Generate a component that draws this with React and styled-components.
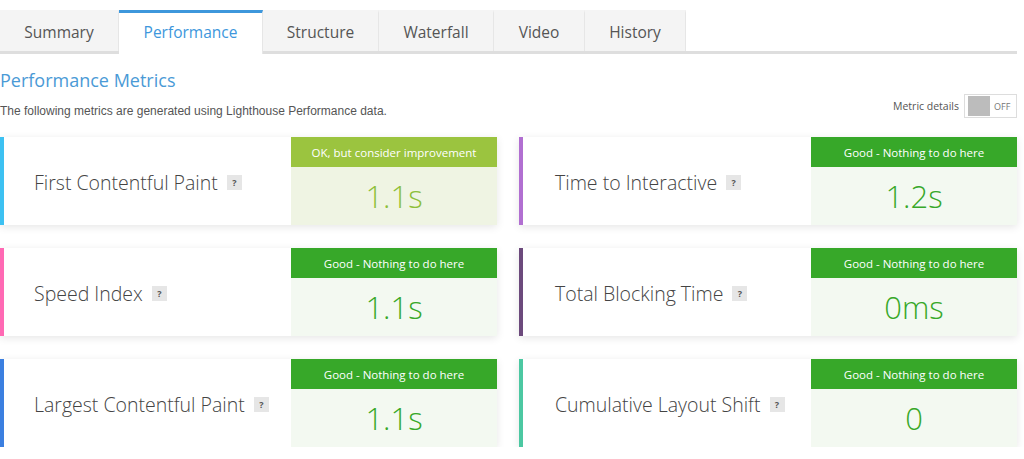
import React from "react";
import styled, { createGlobalStyle } from "styled-components";

const Global = createGlobalStyle`
  body {
    margin: 0;
    background: #fff;
    font-family: "Open Sans", "Liberation Sans", sans-serif;
  }
`;

const Page = styled.div`
  width: 1017px;
  padding-top: 10px;
`;

const Tabs = styled.div`
  display: flex;
  height: 41px;
  border-bottom: 3px solid #dedede;
`;

const Tab = styled.div`
  width: ${(p) => p.w}px;
  flex: none;
  display: flex;
  align-items: center;
  justify-content: center;
  font-size: 15.5px;
  color: ${(p) => (p.active ? "#3d97dc" : "#555")};
  background: ${(p) => (p.active ? "#fff" : "#f4f4f4")};
  border-right: 1px solid #e6e6e6;
  box-sizing: border-box;
  border-top: 3px solid ${(p) => (p.active ? "#3d97dc" : "#f4f4f4")};
  height: ${(p) => (p.active ? "44px" : "41px")};
  padding-bottom: ${(p) => (p.active ? "3px" : "0")};
  position: relative;
  z-index: ${(p) => (p.active ? 1 : 0)};
`;

const Head = styled.div`
  display: flex;
  justify-content: space-between;
  align-items: flex-end;
  margin-top: 14px;
`;

const Title = styled.h2`
  margin: 0;
  font-size: 18px;
  font-weight: 400;
  color: #4a9ad6;
  line-height: 24px;
`;

const Sub = styled.p`
  margin: 12px 0 0;
  font-family: "Liberation Sans", Arial, sans-serif;
  font-size: 12px;
  color: #555;
`;

const Toggle = styled.div`
  display: flex;
  align-items: center;
  gap: 5px;
  font-size: 10.5px;
  color: #555;
  margin-bottom: 0;
`;

const Switch = styled.div`
  width: 53px;
  height: 24px;
  box-sizing: border-box;
  border: 1px solid #ddd;
  display: flex;
  align-items: center;
  padding-left: 3px;
  gap: 4px;
  font-size: 9px;
  color: #777;
  &::before {
    content: "";
    width: 22px;
    height: 20px;
    background: #bcbcbc;
  }
`;

const Grid = styled.div`
  display: grid;
  grid-template-columns: 497px 498px;
  column-gap: 22px;
  row-gap: 23px;
  margin-top: 19px;
`;

const Card = styled.div`
  height: 88px;
  display: flex;
  background: #fff;
  border-left: 4px solid ${(p) => p.color};
  box-shadow: 0 2px 8px rgba(0, 0, 0, 0.1);
`;

const Label = styled.div`
  flex: 1;
  display: flex;
  align-items: center;
  padding-left: ${(p) => (p.right ? 32 : 30)}px;
  padding-top: 3px;
  font-size: 19.5px;
  font-weight: 300;
  color: #444;
`;

const Help = styled.span`
  display: inline-flex;
  align-items: center;
  justify-content: center;
  width: 15px;
  height: 15px;
  margin-left: 9px;
  background: #e6e6e6;
  color: #555;
  font-size: 9px;
  font-weight: 700;
`;

const Status = styled.div`
  width: 206px;
  display: flex;
  flex-direction: column;
`;

const Grade = styled.div`
  height: 30px;
  display: flex;
  align-items: center;
  justify-content: center;
  background: ${(p) => (p.ok ? "#9bc43f" : "#37a829")};
  color: #fff;
  font-size: 11.5px;
`;

const Value = styled.div`
  flex: 1;
  display: flex;
  align-items: center;
  justify-content: center;
  background: ${(p) => (p.ok ? "#eff4e3" : "#f3f9f1")};
  color: ${(p) => (p.ok ? "#8dbf3a" : "#37a829")};
  font-size: 31px;
  font-weight: 300;
`;

const tabs = [
  ["Summary", 119],
  ["Performance", 144],
  ["Structure", 116],
  ["Waterfall", 115],
  ["Video", 91],
  ["History", 101],
];

const metrics = [
  { name: "First Contentful Paint", color: "#3dc1f2", value: "1.1s", ok: true },
  { name: "Time to Interactive", color: "#b16fd1", value: "1.2s" },
  { name: "Speed Index", color: "#ff69b4", value: "1.1s" },
  { name: "Total Blocking Time", color: "#6c4a7c", value: "0ms" },
  { name: "Largest Contentful Paint", color: "#3b7fe0", value: "1.1s" },
  { name: "Cumulative Layout Shift", color: "#4cc8a2", value: "0" },
];

export default function App() {
  return (
    <Page>
      <Global />
      <Tabs>
        {tabs.map(([t, w]) => (
          <Tab key={t} w={w} active={t === "Performance"}>
            {t}
          </Tab>
        ))}
      </Tabs>
      <Head>
        <div>
          <Title>Performance Metrics</Title>
          <Sub>The following metrics are generated using Lighthouse Performance data.</Sub>
        </div>
        <Toggle>
          Metric details
          <Switch>OFF</Switch>
        </Toggle>
      </Head>
      <Grid>
        {metrics.map((m, i) => (
          <Card key={m.name} color={m.color}>
            <Label right={i % 2 === 1}>
              {m.name}
              <Help>?</Help>
            </Label>
            <Status>
              <Grade ok={m.ok}>
                {m.ok ? "OK, but consider improvement" : "Good - Nothing to do here"}
              </Grade>
              <Value ok={m.ok}>{m.value}</Value>
            </Status>
          </Card>
        ))}
      </Grid>
    </Page>
  );
}
